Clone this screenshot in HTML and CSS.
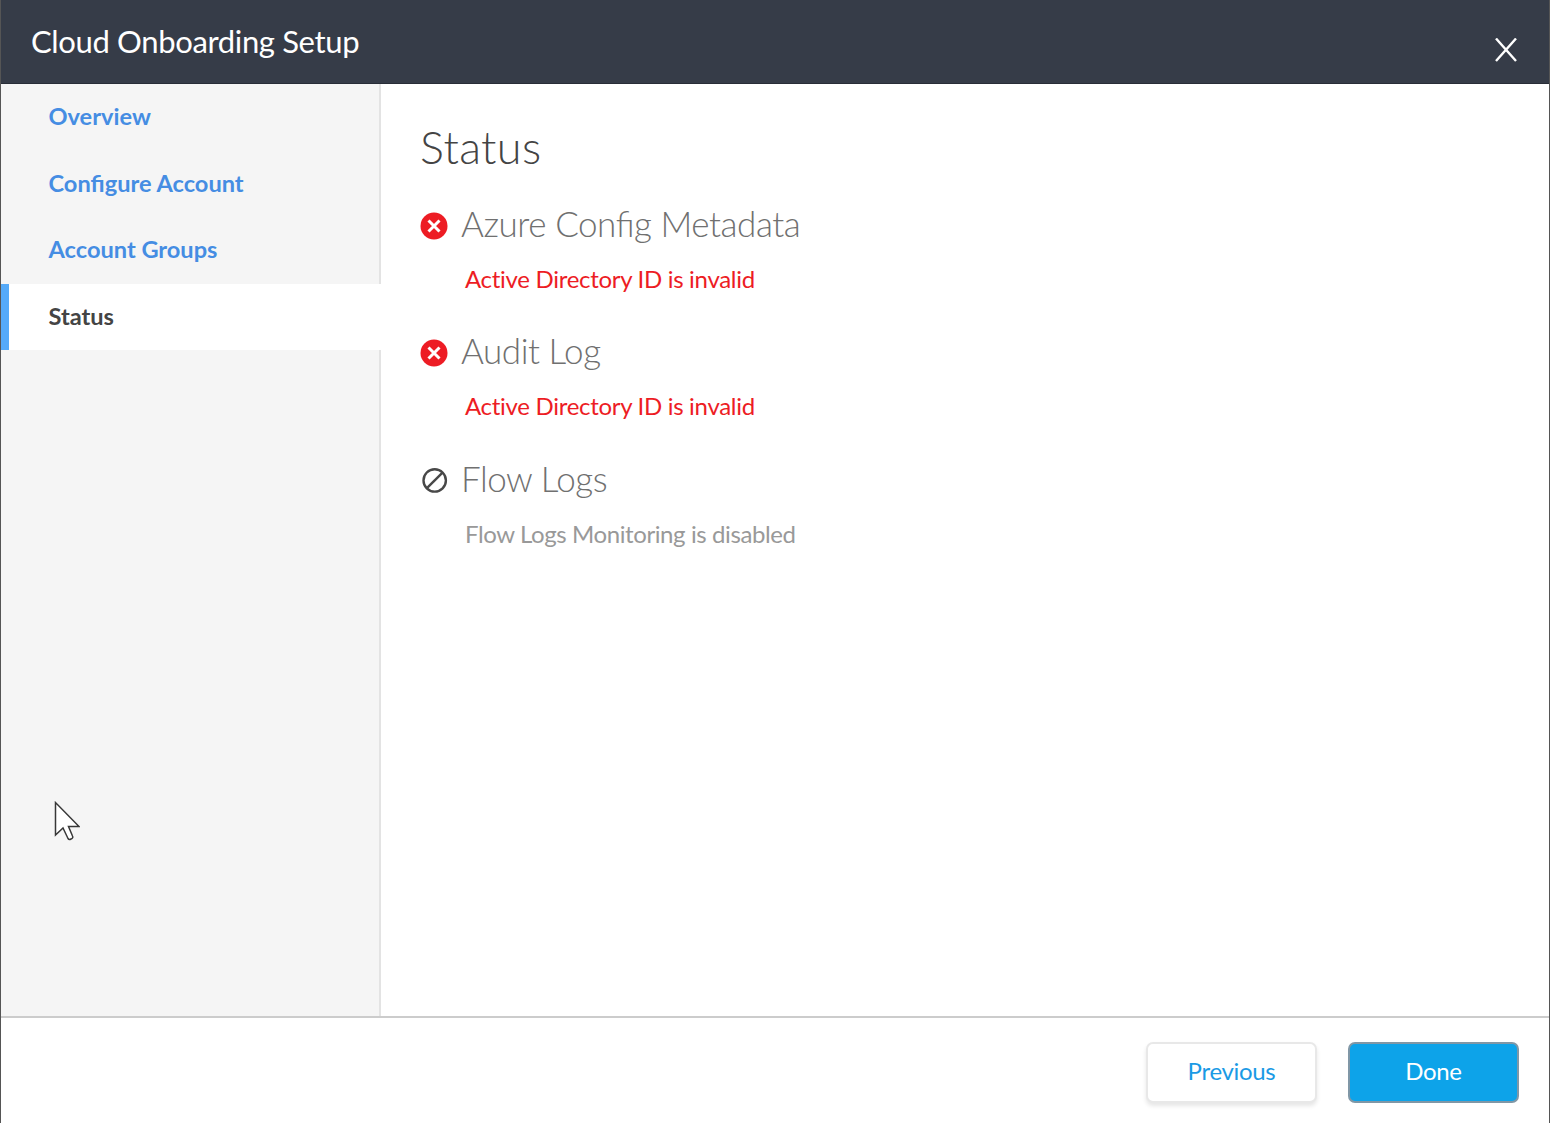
FILE: index.html
```html
<!DOCTYPE html>
<html lang="en">
<head>
<meta charset="utf-8">
<title>Cloud Onboarding Setup</title>
<link rel="stylesheet" href="styles.css">
</head>
<body>
<div class="dialog">
  <header class="header">
    <h1 class="title">Cloud Onboarding Setup</h1>
    <button class="close" aria-label="Close"><svg width="22" height="24" viewBox="0 0 22 24"><path d="M1 .5 21 23M21 .5 1 23" stroke="#fff" stroke-width="2.400"/></svg></button>
  </header>
  <div class="body">
    <nav class="sidebar">
      <a class="step">Overview</a>
      <a class="step">Configure Account</a>
      <a class="step">Account Groups</a>
      <a class="step active">Status</a>
    </nav>
    <main class="content">
      <h2 class="heading">Status</h2>
      <section class="item">
        <div class="item-head"><svg class="icon" viewBox="0 0 28 28"><circle cx="14" cy="14" r="13.500" fill="#ed1c24"/><path d="M8.500 8.500l11 11M19.500 8.500l-11 11" stroke="#fff" stroke-width="3"/></svg><h3 class="name">Azure Config Metadata</h3></div>
        <p class="message">Active Directory ID is invalid</p>
      </section>
      <section class="item">
        <div class="item-head"><svg class="icon" viewBox="0 0 28 28"><circle cx="14" cy="14" r="13.500" fill="#ed1c24"/><path d="M8.500 8.500l11 11M19.500 8.500l-11 11" stroke="#fff" stroke-width="3"/></svg><h3 class="name">Audit Log</h3></div>
        <p class="message">Active Directory ID is invalid</p>
      </section>
      <section class="item">
        <div class="item-head"><svg class="icon" viewBox="0 0 28 28"><circle cx="14.700" cy="14.400" r="11.200" fill="none" stroke="#484848" stroke-width="2.400"/><path d="M22.500 6.600 6.900 22.200" stroke="#484848" stroke-width="2.400"/></svg><h3 class="name">Flow Logs</h3></div>
        <p class="message muted">Flow Logs Monitoring is disabled</p>
      </section>
    </main>
  </div>
  <footer class="footer">
    <button class="btn">Previous</button>
    <button class="btn primary">Done</button>
  </footer>
  <svg class="cursor" width="28" height="42" viewBox="0 0 28 42"><path d="M3.500 2.500V35L11 28 16 38.500Q17 40 19 39 21.500 38 20.500 36L16.500 26.500H27Z" fill="#fff" stroke="#383838" stroke-width="1.500"/></svg>
</div>
</body>
</html>
```
FILE: styles.css
```css
* { box-sizing: border-box; }
body { margin: 0; font-family: Lato, sans-serif; background: #fff; }
h1, h2, h3, p { margin: 0; }
button { font-family: inherit; }
.dialog { position: relative; height: 1123px; display: flex; flex-direction: column; border: solid #555; border-width: 0 1px; }
.header { height: 84px; background: #363c48; border-bottom: 1px solid #282d37; display: flex; justify-content: space-between; padding: 0 32px 0 30px; }
.title { font-size: 31px; font-weight: 400; line-height: 83px; letter-spacing: -0.35px; color: #fff; white-space: nowrap; }
.close { border: 0; background: none; padding: 38px 0 0; height: 62px; display: flex; }
.body { flex: 1; display: flex; min-height: 0; }
.sidebar { width: 380px; background: #f5f5f5; border-right: 2px solid #e3e3e3; }
.step { display: block; height: 66.600px; line-height: 65px; padding-left: 47.500px; font-size: 23.600px; font-weight: 700; color: #458de3; }
.step.active { width: 380px; background: #fff; color: #444; border-left: 8px solid #55aaf9; padding-left: 39.500px; }
.content { padding: 32px 39px; }
.heading { font-size: 45px; line-height: 62px; font-weight: 300; letter-spacing: 0.350px; color: #444; }
.item { height: 127.300px; padding-top: 20px; }
.item-head { display: flex; align-items: center; gap: 13px; height: 50px; }
.icon { width: 28px; height: 28px; margin-top: 5px; }
.name { font-size: 35px; line-height: 50px; font-weight: 300; letter-spacing: -0.450px; font-feature-settings: "liga" 1; color: #707070; }
.message { margin: 16px 0 0 45px; font-size: 24px; line-height: 30px; letter-spacing: -0.300px; color: #ed1c24; }
.message.muted { color: #999; letter-spacing: -0.400px; }
.footer { height: 107px; border-top: 2px solid #ccc; display: flex; justify-content: flex-end; gap: 31px; padding: 24px 30px; }
.btn { width: 171px; height: 61px; padding: 0 0 4px; font-size: 24px; letter-spacing: -0.320px; color: #1a9ae5; background: #fff; border: 2px solid #e8e8e8; border-radius: 7px; box-shadow: 0 3px 4px rgba(0, 0, 0, 0.1); }
.btn.primary { background: #0da3e9; color: #fff; border-color: #8097a6; box-shadow: none; }
.cursor { position: absolute; left: 51px; top: 800px; }
```
